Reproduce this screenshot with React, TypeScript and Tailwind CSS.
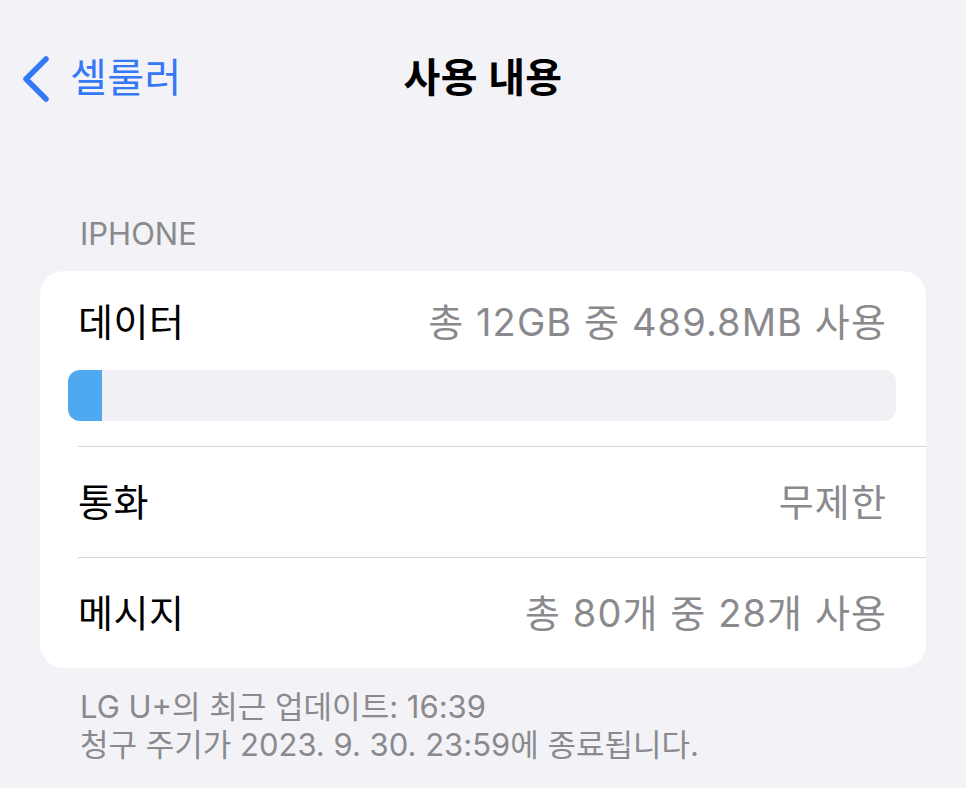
import React from "react";

const rows = [
  { label: "통화", value: "무제한" },
  { label: "메시지", value: "총 80개 중 28개 사용" },
];

const font = "font-['Inter','Noto_Sans_CJK_KR',sans-serif]";

export default function App() {
  const used = 489.8;
  const total = 12 * 1024;
  const pct = Math.max((used / total) * 100, 4.1);

  return (
    <div className={`min-h-[788px] w-[966px] bg-[#f2f2f7] ${font}`}>
      {/* nav bar */}
      <div className="relative flex h-[156px] items-start pt-[52px]">
        <div className="flex items-center pl-[20px] text-[#3478f6]">
          <svg width="32" height="48" viewBox="0 0 32 48" className="mt-[2px]">
            <path
              d="M26 4 L6 24 L26 44"
              fill="none"
              stroke="currentColor"
              strokeWidth="5.5"
              strokeLinecap="round"
              strokeLinejoin="round"
            />
          </svg>
          <span className="ml-[18px] text-[40px] leading-[52px] tracking-[0.5px]">셀룰러</span>
        </div>
        <div className="absolute left-0 right-0 top-[52px] flex justify-center">
          <span className="text-[40px] font-semibold leading-[52px] tracking-[0.3px] text-black">사용 내용</span>
        </div>
      </div>

      {/* section header */}
      <div className="px-[80px] pt-[58px] text-[31px] leading-[40px] tracking-[0px] text-[#8a8a8e]">IPHONE</div>

      {/* card */}
      <div className="mx-[40px] mt-[17px] overflow-hidden rounded-[24px] bg-white">
        <div className="pl-[38px]">
          <div className="flex items-center justify-between pr-[39px] pt-[25px]">
            <span className="text-[38px] leading-[52px] tracking-[0.5px] text-black">데이터</span>
            <span className="text-[38px] leading-[52px] tracking-[1.1px] text-[#8a8a8e]">총 12GB 중 489.8MB 사용</span>
          </div>
          <div className="mr-[30px] ml-[-10px] mt-[22px] h-[51px] overflow-hidden rounded-[12px] bg-[#f0f0f5]">
            <div className="h-full bg-[#4fa9f0]" style={{ width: `${pct}%` }} />
          </div>
          <div className="mt-[25px] h-px bg-[#d8d8dc]" />
          {rows.map((row, i) => (
            <div key={row.label}>
              <div className="flex h-[110px] items-center justify-between pr-[39px]">
                <span className="text-[38px] leading-[52px] tracking-[0.5px] text-black">{row.label}</span>
                <span className="text-[38px] leading-[52px] tracking-[1.1px] text-[#8a8a8e]">{row.value}</span>
              </div>
              {i < rows.length - 1 && <div className="h-px bg-[#d8d8dc]" />}
            </div>
          ))}
        </div>
      </div>

      {/* footer */}
      <div className="px-[80px] pt-[20px] text-[31px] leading-[38px] tracking-[0px] text-[#8a8a8e]">
        <div>LG U+의 최근 업데이트: 16:39</div>
        <div>청구 주기가 2023. 9. 30. 23:59에 종료됩니다.</div>
      </div>
    </div>
  );
}
